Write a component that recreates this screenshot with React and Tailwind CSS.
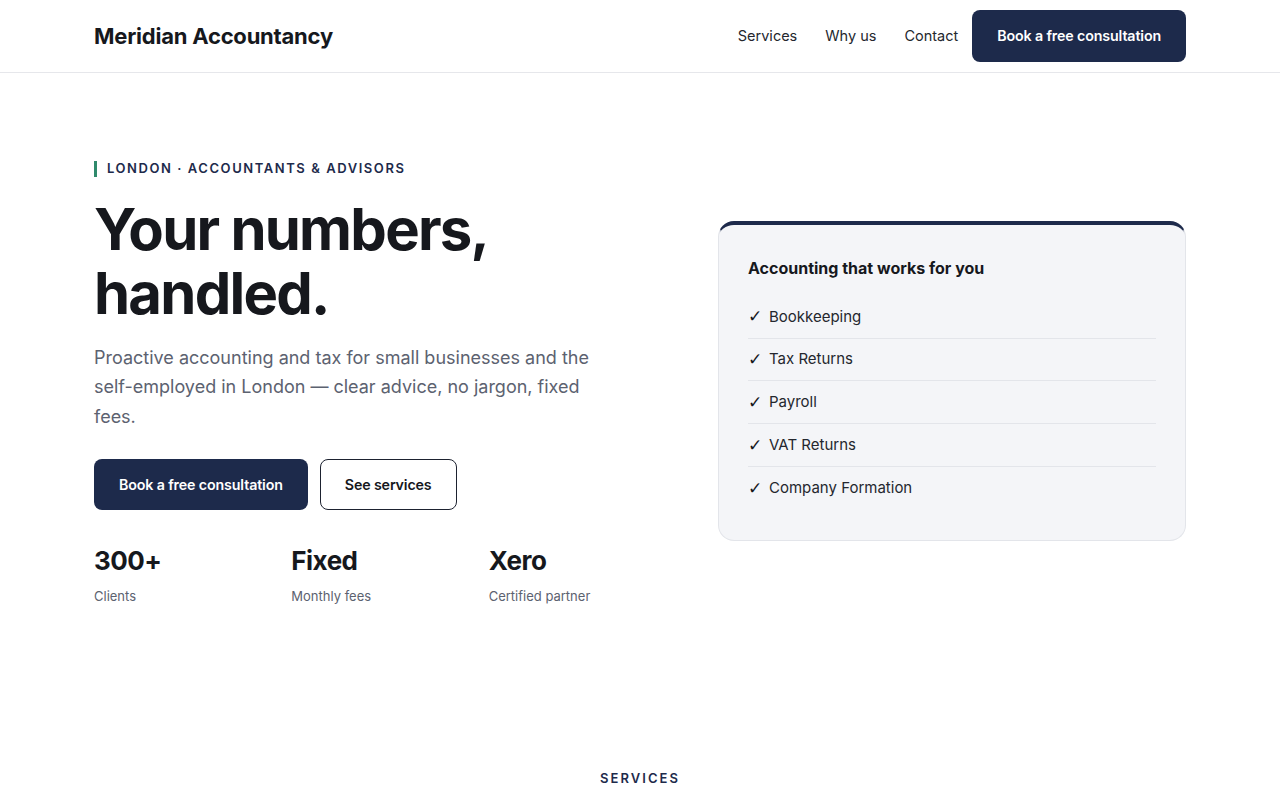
import React from 'react'

const services = ['Bookkeeping', 'Tax Returns', 'Payroll', 'VAT Returns', 'Company Formation']

const stats = [
  { value: '300+', label: 'Clients' },
  { value: 'Fixed', label: 'Monthly fees' },
  { value: 'Xero', label: 'Certified partner' },
]

function App() {
  return (
    <div className="min-h-screen bg-white text-[#16181d] font-['Inter',sans-serif]">
      {/* Header */}
      <header className="border-b border-[#e6e7eb]">
        <div className="max-w-[1092px] mx-auto h-[72px] flex items-center justify-between">
          <a href="#" className="font-['Inter',sans-serif] text-[22px] font-bold tracking-[-0.01em] text-[#16181d]">
            Meridian Accountancy
          </a>
          <nav className="flex items-center">
            <a href="#" className="text-[14.5px] text-[#24272e] mr-7">Services</a>
            <a href="#" className="text-[14.5px] text-[#24272e] mr-7">Why us</a>
            <a href="#" className="text-[14.5px] text-[#24272e] mr-[14px]">Contact</a>
            <a href="#" className="h-[52px] px-[25px] flex items-center rounded-lg bg-[#1d2a4b] text-white text-[14.25px] font-semibold tracking-[-0.01em]">
              Book a free consultation
            </a>
          </nav>
        </div>
      </header>

      {/* Hero */}
      <section className="max-w-[1092px] mx-auto pt-[86px] pb-[162px] grid grid-cols-[560px_1fr] gap-16 items-center">
        <div>
          <div className="flex items-center gap-[10px] mb-[18px]">
            <span className="w-[3px] h-[16px] bg-[#2f8a6c]"></span>
            <span className="text-[13px] font-semibold tracking-[0.12em] text-[#1d2a4b]">
              LONDON · ACCOUNTANTS &amp; ADVISORS
            </span>
          </div>
          <h1 className="text-[58px] leading-[64px] font-bold tracking-[-0.03em] text-[#16181d]">
            Your numbers,<br />handled.
          </h1>
          <p className="mt-[18px] max-w-[510px] text-[18px] leading-[29.5px] text-[#5c6270]">
            Proactive accounting and tax for small businesses and the self-employed in London — clear advice, no jargon, fixed fees.
          </p>
          <div className="mt-[28px] flex gap-3">
            <a href="#" className="h-[51px] px-[25px] flex items-center rounded-lg bg-[#1d2a4b] text-white text-[14.25px] font-semibold tracking-[-0.01em]">
              Book a free consultation
            </a>
            <a href="#" className="h-[51px] px-[24px] flex items-center rounded-lg border border-[#1d2230] text-[#16181d] text-[14.25px] font-semibold tracking-[-0.01em]">
              See services
            </a>
          </div>
          <div className="mt-[34px] grid grid-cols-3 gap-8">
            {stats.map((s) => (
              <div key={s.label}>
                <div className="text-[26px] leading-[34px] font-bold tracking-[-0.02em] text-[#16181d]">{s.value}</div>
                <div className="mt-[9px] text-[13px] text-[#5c6270]">{s.label}</div>
              </div>
            ))}
          </div>
        </div>

        <div className="-mt-[4px] rounded-2xl bg-[#f4f5f8] border border-[#e3e5ea] border-t-4 border-t-[#1d2a4b] px-[29px] pt-[31px] pb-[30px]">
          <h3 className="text-[16px] font-bold text-[#16181d] mb-[16px]">
            Accounting that works for you
          </h3>
          <ul>
            {services.map((s, i) => (
              <li
                key={s}
                className={
                  i < services.length - 1
                    ? 'flex items-center gap-[8px] h-[42.75px] border-b border-[#e3e5ea] text-[15px] text-[#24272e]'
                    : 'flex items-center gap-[8px] h-[42.75px] text-[15px] text-[#24272e]'
                }
              >
                <span className="w-[13px] font-['DejaVu_Sans',sans-serif] text-[17px] leading-none text-[#16181d]">✓</span>
                {s}
              </li>
            ))}
          </ul>
        </div>
      </section>

      {/* Services */}
      <section className="max-w-[1092px] mx-auto text-center">
        <div className="text-[13px] font-semibold tracking-[0.16em] text-[#1d2a4b]">SERVICES</div>
      </section>
    </div>
  )
}

export default App
